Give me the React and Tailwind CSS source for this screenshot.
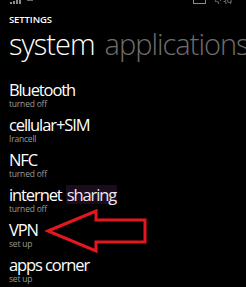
import React from 'react';

const items = [
  { title: 'Bluetooth', sub: 'turned off' },
  { title: 'cellular+SIM', sub: 'Irancell' },
  { title: 'NFC', sub: 'turned off' },
  { title: 'internet', highlight: 'sharing', sub: 'turned off' },
  { title: 'VPN', sub: 'set up' },
  { title: 'apps corner', sub: 'set up' },
];

const StatusBar = () => (
  <div className="flex h-[4px] items-end justify-between overflow-hidden px-[10px]">
    <div className="flex items-end gap-[6px]">
      <div className="flex items-end gap-[1px]">
        <div className="h-[2px] w-[2px] bg-[#8a8a8a]" />
        <div className="h-[3px] w-[2px] bg-[#8a8a8a]" />
        <div className="h-[4px] w-[2px] bg-[#8a8a8a]" />
        <div className="h-[4px] w-[2px] bg-[#8a8a8a]" />
      </div>
      <div className="h-[4px] w-[6px] border-t border-[#6a6a6a]" />
    </div>
    <div className="flex items-end gap-[8px] pr-[4px]">
      <div className="h-[4px] w-[13px] border-b border-l border-r border-[#8a8a8a]" />
      <span className="text-[9px] leading-[4px] text-[#8a8a8a]">5:39</span>
    </div>
  </div>
);

export default function App() {
  return (
    <div className="relative h-[287px] w-[246px] overflow-hidden bg-black font-['Open_Sans',sans-serif] text-white">
      <StatusBar />
      <div className="pl-[9px]">
        <div className="mt-[10px] text-[9.5px] font-semibold leading-[11px] tracking-[-0.1px]">SETTINGS</div>
        <div className="mt-[4px] flex gap-[10px] whitespace-nowrap text-[29px] font-light leading-[30px] tracking-[-1px]">
          <span>system</span>
          <span className="text-[#6e6e6e]">applications</span>
        </div>
        <div className="mt-[21px] flex flex-col gap-[6px]">
          {items.map((item) => (
            <div key={item.title} className="flex flex-col">
              <div className="flex text-[16.5px] leading-[19px] tracking-[-1.1px]">
                <span>{item.title}</span>
                {item.highlight && (
                  <span className="ml-[4px] bg-[#1a0c1c] px-[1px] text-[#f0e8f0]">{item.highlight}</span>
                )}
              </div>
              <div className="text-[8.5px] leading-[10px] tracking-[-0.2px] text-[#9a9a9a]">{item.sub}</div>
            </div>
          ))}
        </div>
      </div>
      <svg className="absolute left-0 top-0" width="246" height="287" viewBox="0 0 246 287">
        <polygon
          points="48,231 96,211 96,220 145,220 145,242 96,242 96,251"
          fill="none"
          stroke="#e5161e"
          strokeWidth="3"
          strokeLinejoin="miter"
        />
      </svg>
    </div>
  );
}
